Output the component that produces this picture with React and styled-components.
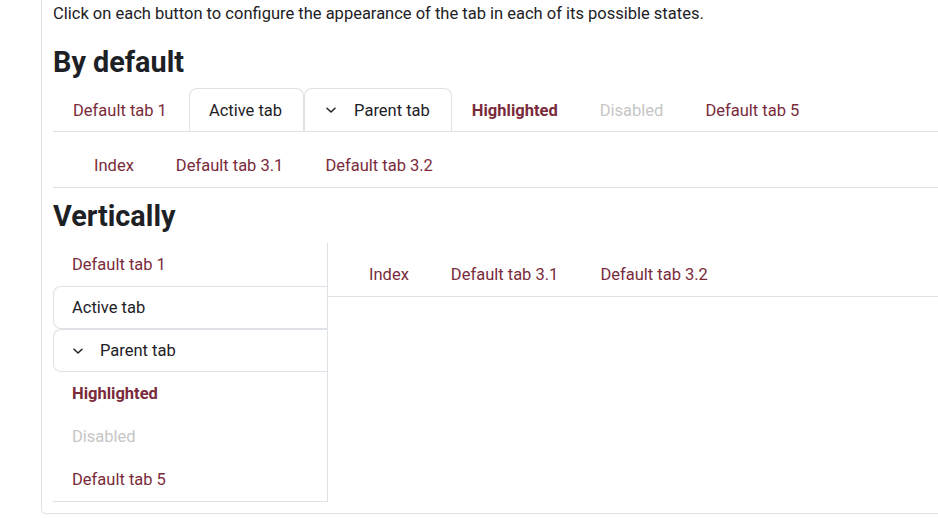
import React from "react";
import styled, { createGlobalStyle, css } from "styled-components";

const Global = createGlobalStyle`
  html, body { margin: 0; padding: 0; background: #fff; }
  body { font-family: Roboto, "Noto Sans", "Liberation Sans", sans-serif; color: #1d2125; }
  * { box-sizing: border-box; }
`;

const BORDER = "#dee2e6";
const LINK = "#7a2b3b";
const FS = "16.5px";

const Page = styled.div`
  width: 938px;
  height: 518px;
  overflow: hidden;
  padding-left: 41px;
`;

const Card = styled.div`
  border-left: 1px solid ${BORDER};
  border-bottom: 1px solid ${BORDER};
  border-bottom-left-radius: 5px;
  padding: 3px 0 11px 11px;
`;

const Intro = styled.p`
  margin: 0;
  font-size: ${FS};
  line-height: 22px;
`;

const Heading = styled.h3`
  margin: ${(p) => (p.$first ? "20px" : "11px")} 0 ${(p) => (p.$first ? "9px" : "10px")};
  font-size: 28.8px;
  font-weight: 700;
  line-height: 34px;
`;

const TabList = styled.div`
  display: flex;
  border-bottom: 1px solid ${BORDER};
`;

const stateStyles = css`
  ${(p) =>
    p.$state === "active" &&
    css`
      color: #1d2125;
      border-color: ${BORDER};
    `}
  ${(p) =>
    p.$state === "highlighted" &&
    css`
      font-weight: 700;
    `}
  ${(p) =>
    p.$state === "disabled" &&
    css`
      color: #c6c6c6;
    `}
`;

const Tab = styled.div`
  height: 43px;
  display: flex;
  align-items: center;
  gap: 17px;
  padding: 0 21px 0 19px;
  font-size: ${FS};
  color: ${LINK};
  border: 1px solid transparent;
  border-bottom: none;
  border-radius: 8px 8px 0 0;
  white-space: nowrap;
  ${(p) => p.$wide && css`padding-left: 20px;`}
  ${stateStyles}
`;

const SubList = styled.div`
  display: flex;
  margin-top: 12px;
  padding-left: 20px;
  border-bottom: 1px solid ${BORDER};
`;

const SubTab = styled.div`
  height: 43px;
  display: flex;
  align-items: center;
  padding: 0 21px;
  font-size: ${FS};
  color: ${LINK};
  white-space: nowrap;
`;

const Vertical = styled.div`
  display: flex;
  align-items: flex-start;
`;

const VList = styled.div`
  width: 275px;
  flex: none;
  display: flex;
  flex-direction: column;
  border-right: 1px solid ${BORDER};
  border-bottom: 1px solid ${BORDER};
`;

const VTab = styled.div`
  height: 43px;
  display: flex;
  align-items: center;
  gap: 16px;
  padding: 0 18px;
  font-size: ${FS};
  color: ${LINK};
  border: 1px solid transparent;
  border-right: none;
  border-radius: 8px 0 0 8px;
  white-space: nowrap;
  ${stateStyles}
`;

const VContent = styled.div`
  flex: 1;
  padding-top: 10px;
`;

const VSubList = styled(SubList)`
  margin-top: 0;
  padding-left: 20px;
`;

const Chevron = () => (
  <svg width="12" height="12" viewBox="0 0 12 12" fill="none" stroke="#1d2125" strokeWidth="1.5" strokeLinecap="round" strokeLinejoin="round">
    <path d="M2 4.2 L6 8 L10 4.2" />
  </svg>
);

const tabs = [
  { label: "Default tab 1" },
  { label: "Active tab", state: "active" },
  { label: "Parent tab", state: "active", chevron: true },
  { label: "Highlighted", state: "highlighted" },
  { label: "Disabled", state: "disabled" },
  { label: "Default tab 5" },
];

const subs = ["Index", "Default tab 3.1", "Default tab 3.2"];

export default function App() {
  return (
    <>
      <Global />
      <Page>
        <Card>
          <Intro>Click on each button to configure the appearance of the tab in each of its possible states.</Intro>
          <Heading $first>By default</Heading>
          <TabList>
            {tabs.map((t) => (
              <Tab key={t.label} $state={t.state} $wide={t.chevron}>
                {t.chevron && <Chevron />}
                {t.label}
              </Tab>
            ))}
          </TabList>
          <SubList>
            {subs.map((s) => (
              <SubTab key={s}>{s}</SubTab>
            ))}
          </SubList>
          <Heading>Vertically</Heading>
          <Vertical>
            <VList>
              {tabs.map((t) => (
                <VTab key={t.label} $state={t.state}>
                  {t.chevron && <Chevron />}
                  {t.label}
                </VTab>
              ))}
            </VList>
            <VContent>
              <VSubList>
                {subs.map((s) => (
                  <SubTab key={s}>{s}</SubTab>
                ))}
              </VSubList>
            </VContent>
          </Vertical>
        </Card>
      </Page>
    </>
  );
}
